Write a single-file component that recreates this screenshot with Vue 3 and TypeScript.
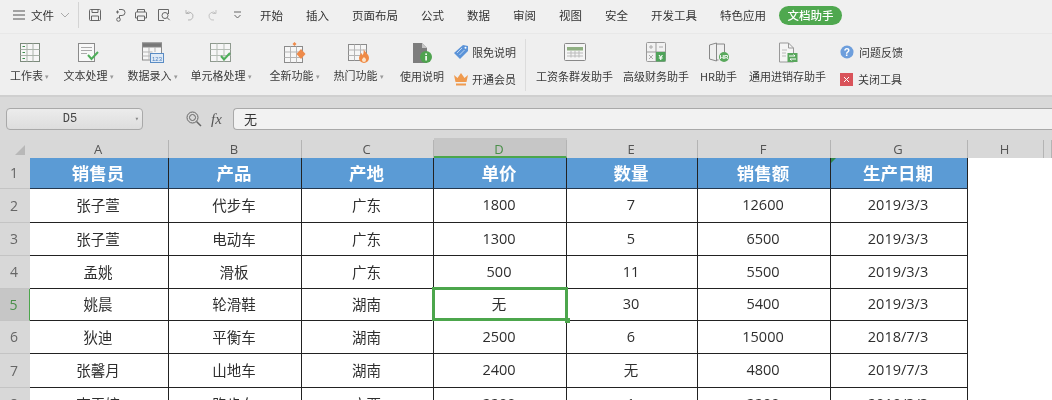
<script setup lang="ts">
const tabs: string[] = ['开始', '插入', '页面布局', '公式', '数据', '审阅', '视图', '安全', '开发工具', '特色应用']
const cols: string[] = ['A', 'B', 'C', 'D', 'E', 'F', 'G', 'H']
const head: string[] = ['销售员', '产品', '产地', '单价', '数量', '销售额', '生产日期']
const rows: string[][] = [
  ['张子萱', '代步车', '广东', '1800', '7', '12600', '2019/3/3'],
  ['张子萱', '电动车', '广东', '1300', '5', '6500', '2019/3/3'],
  ['孟姚', '滑板', '广东', '500', '11', '5500', '2019/3/3'],
  ['姚晨', '轮滑鞋', '湖南', '无', '30', '5400', '2019/3/3'],
  ['狄迪', '平衡车', '湖南', '2500', '6', '15000', '2018/7/3'],
  ['张馨月', '山地车', '湖南', '2400', '无', '4800', '2019/7/3'],
  ['李玉婷', '跑步车', '广西', '2200', '1', '2200', '2019/3/3'],
]
</script>

<template>
  <div class="app">
    <header class="topbar">
      <svg class="menu" width="12" height="10" viewBox="0 0 12 10"><path d="M0 1h12M0 5h12M0 9h12" stroke="#555" fill="none" /></svg>
      <span class="file">文件</span>
      <svg class="chev" width="10" height="6" viewBox="0 0 10 6"><path d="M1 1l4 4 4-4" stroke="#aaa" fill="none" /></svg>
      <i class="vsep"></i>
      <div class="quick">
        <svg width="14" height="14" viewBox="0 0 14 14" fill="none" stroke="#666"><path d="M1.5 2.5a1 1 0 0 1 1-1h9a1 1 0 0 1 1 1v9a1 1 0 0 1-1 1h-9a1 1 0 0 1-1-1zM4 1.5v3h6v-3M3.5 12.5V8h7v4.5" /></svg>
        <svg width="14" height="14" viewBox="0 0 14 14" fill="none" stroke="#666"><path d="M3 4h3M4.5 2.500v3M6 1.500h3a3 3 0 0 1 0 6H6.500v2.500" /><circle cx="5.500" cy="11.500" r="1.800" /></svg>
        <svg width="14" height="14" viewBox="0 0 14 14" fill="none" stroke="#666"><path d="M3.500 4V1.500h7V4M3.500 10H1.500V5a1 1 0 0 1 1-1h9a1 1 0 0 1 1 1v5h-2M3.500 8h7v4.500h-7z" /></svg>
        <svg width="14" height="14" viewBox="0 0 14 14" fill="none" stroke="#666"><path d="M11.500 6V1.500h-10v11H7" /><circle cx="8" cy="7.500" r="3" /><path d="M10.200 9.700l2.500 2.500" /></svg>
        <svg class="dim" width="12" height="12" viewBox="0 0 12 12" fill="none" stroke="#b5b5b5"><path d="M3 1v3.500h3.500M3 4.500A4 4 0 1 1 5 11" /></svg>
        <svg class="dim" width="12" height="12" viewBox="0 0 12 12" fill="none" stroke="#c4c4c4"><path d="M9 1v3.500H5.500M9 4.500A4 4 0 1 0 7 11" /></svg>
        <svg class="drop" width="9" height="8" viewBox="0 0 9 8" fill="none" stroke="#666"><path d="M1 1h7M1.500 4l3 3 3-3" /></svg>
      </div>
      <nav class="tabs">
        <span v-for="t in tabs" :key="t">{{ t }}</span>
        <b class="pill">文档助手</b>
      </nav>
    </header>

    <section class="ribbon">
      <div class="tool w-a">
        <svg width="22" height="21" viewBox="0 0 22 21" fill="none" stroke="#7c8a7c"><rect x="1.500" y="1.500" width="19" height="18" fill="#f6f6f6" /><path d="M8 1.500v18M14 1.500v18M1.500 7.500h19M1.500 13.500h19" stroke="#aab3aa" /><path d="M3.500 4.500h2.500M3.500 10.500h2.500M3.500 16.500h2.500" stroke="#3f8f4f" /></svg>
        <span>工作表<em>▾</em></span>
      </div>
      <div class="tool w-b">
        <svg width="24" height="21" viewBox="0 0 24 21" fill="none" stroke="#8a8a8a"><rect x="1.500" y="1.500" width="16" height="18" fill="#f8f8f8" /><path d="M4 5.500h11M4 8.500h11M4 11.500h6" stroke="#aaa" /><path d="M11 13l3.500 4 6.500-7" stroke="#4fae5a" stroke-width="2" /></svg>
        <span>文本处理<em>▾</em></span>
      </div>
      <div class="tool w-c">
        <svg width="24" height="21" viewBox="0 0 24 21" fill="none" stroke="#8b8b8b"><rect x="1.500" y="1" width="19" height="17" fill="#f6f6f6" /><rect x="1.500" y="1" width="19" height="4" fill="#777" /><path d="M8 5v13M14 5v5M1.500 10h10M1.500 14h10" stroke="#b5b5b5" /><rect x="9.500" y="11.500" width="13" height="9" fill="#dfeaf6" stroke="#5a8cc4" /><text x="16" y="19" text-anchor="middle" class="num" fill="#4a7fbf" stroke="none">123</text></svg>
        <span>数据录入<em>▾</em></span>
      </div>
      <div class="tool w-d">
        <svg width="24" height="21" viewBox="0 0 24 21" fill="none" stroke="#8f9a8f"><rect x="1.500" y="1.500" width="20" height="18" fill="#f6f6f6" /><path d="M8 1.500v18M15 1.500v18M1.500 7.500h20M1.500 13.500h20" stroke="#b5bdb5" /><path d="M12 14l3 3.500 6-6.500" stroke="#4fae5a" stroke-width="2" /></svg>
        <span>单元格处理<em>▾</em></span>
      </div>
      <div class="tool w-e">
        <svg width="24" height="22" viewBox="0 0 24 22" fill="none" stroke="#8b8b8b"><rect x="1.500" y="4.500" width="18" height="16" fill="#f6f6f6" /><path d="M7.500 4.500v16M13.500 4.500v16M1.500 10h18M1.500 15.500h18" stroke="#b5b5b5" /><path d="M18 7l4.500 5-4.500 5-4.500-5z" fill="#ee8a4a" stroke="none" /><path d="M11.500 0l2 2-2 2-2-2z" fill="#ee8a4a" stroke="none" /></svg>
        <span>全新功能<em>▾</em></span>
      </div>
      <div class="tool w-f">
        <svg width="24" height="22" viewBox="0 0 24 22" fill="none" stroke="#8b8b8b"><rect x="1.500" y="2.500" width="18" height="16" fill="#f6f6f6" /><path d="M7.500 2.500v16M13.500 2.500v16M1.500 8h18M1.500 13.500h18" stroke="#b5b5b5" /><path d="M16.500 7c1 3 5.500 5 5.500 9a5 5 0 0 1-10 0c0-2 1.500-3 2-5 1 .5 1.500 1.500 1.500 2.500 1-1.500 1.500-4 1-6.500z" fill="#ef8a45" stroke="none" /><path d="M17 15c.8 1 2 1.600 2 3a2 2 0 0 1-4 0c0-1 .7-1.500 2-3z" fill="#fbe3c8" stroke="none" /></svg>
        <span>热门功能<em>▾</em></span>
      </div>
      <div class="tool w-g">
        <svg width="24" height="22" viewBox="0 0 24 22"><path d="M3 1h9l5 5v15H3z" fill="#7d7d7d" /><path d="M12 1l5 5h-5z" fill="#c5c5c5" /><circle cx="16" cy="15" r="6" fill="#4fa34f" /><rect x="15.300" y="14" width="1.600" height="4.500" fill="#fff" /><rect x="15.300" y="11.400" width="1.600" height="1.600" fill="#fff" /></svg>
        <span>使用说明</span>
      </div>
      <div class="pair first">
        <div class="link">
          <svg width="16" height="16" viewBox="0 0 16 16"><path d="M10 1l5 1 0 5-8 8-6-6z" fill="#5b93d8" /><path d="M4 9l5-5M6.500 11l5-5" stroke="#bcd5f2" /><circle cx="12.500" cy="3.700" r="1" fill="#fff" /></svg>
          <span>限免说明</span>
        </div>
        <div class="link">
          <svg width="16" height="14" viewBox="0 0 16 14"><path d="M1 3l3.500 3L8 1l3.500 5L15 3l-1.500 7h-11z" fill="#ef9a4e" /><rect x="3" y="11.500" width="10" height="2" fill="#ef9a4e" /></svg>
          <span>开通会员</span>
        </div>
      </div>
      <i class="rsep"></i>
      <div class="tool w-h">
        <svg width="24" height="20" viewBox="0 0 24 20" fill="none" stroke="#888"><rect x="1.500" y="1.500" width="21" height="17" rx="1" fill="#f5f5f5" /><rect x="4" y="5" width="16" height="3.500" fill="#8faf82" stroke="none" /><path d="M4 11h16M4 14h16M8 8.500v7M12 8.500v7M16 8.500v7" stroke="#bbb" /></svg>
        <span>工资条群发助手</span>
      </div>
      <div class="tool w-i">
        <svg width="20" height="20" viewBox="0 0 20 20" fill="none" stroke="#999"><rect x=".5" y=".5" width="19" height="19" rx="1" fill="#f2f2f2" /><path d="M10 .5v19M.5 10h19" /><path d="M3 5h4M5 3v4M13 5h4M3 13l4 4M7 13l-4 4" stroke="#aaa" /><rect x="10" y="10" width="9.500" height="9.500" fill="#4fa35a" stroke="none" /><text x="14.800" y="18" text-anchor="middle" class="yen" fill="#fff" stroke="none">¥</text></svg>
        <span>高级财务助手</span>
      </div>
      <div class="tool w-j">
        <svg width="22" height="21" viewBox="0 0 22 21" fill="none" stroke="#888"><path d="M1.500 3l7-2v18l-7-2zM8.500 2h8v8" /><path d="M8.500 18h2" /><circle cx="16" cy="15" r="5" fill="#59a85c" stroke="none" /><text x="16" y="17" text-anchor="middle" class="hr" fill="#fff" stroke="none">HR</text></svg>
        <span>HR助手</span>
      </div>
      <div class="tool w-k">
        <svg width="20" height="21" viewBox="0 0 20 21" fill="none" stroke="#999"><path d="M1.500 1h9l5 5v14h-14z" fill="#f5f5f5" /><path d="M10.500 1v5h5" /><path d="M4 8h5M4 11h4M4 14h4" stroke="#bbb" /><rect x="9.500" y="11" width="10" height="9" fill="#58a65c" stroke="none" /><path d="M11 14h6l-1.500-1.500M18 17h-6l1.500 1.500" stroke="#fff" /></svg>
        <span>通用进销存助手</span>
      </div>
      <div class="pair last">
        <div class="link">
          <svg width="14" height="14" viewBox="0 0 15 15"><circle cx="7.500" cy="7.500" r="7" fill="#6d9edc" /><text x="7.500" y="11.500" text-anchor="middle" class="q" fill="#fff">?</text></svg>
          <span>问题反馈</span>
        </div>
        <div class="link">
          <svg width="13" height="13" viewBox="0 0 13 13"><rect width="13" height="13" fill="#d9535a" /><path d="M4 4l5 5M9 4l-5 5" stroke="#fff" /></svg>
          <span>关闭工具</span>
        </div>
      </div>
    </section>

    <section class="formula">
      <div class="namebox"><span>D5</span><em>▾</em></div>
      <svg class="zoomico" width="16" height="16" viewBox="0 0 16 16" fill="none" stroke="#666"><circle cx="6.500" cy="6.500" r="5.500" /><circle cx="6.500" cy="6.500" r="3" /><path d="M10.500 10.500l4.500 4.500" stroke-width="1.500" /></svg>
      <span class="fx">fx</span>
      <div class="input">无</div>
    </section>

    <section class="sheet">
      <div class="corner"><i></i></div>
      <div v-for="c in cols" :key="c" class="colhead" :class="{ active: c === 'D' }">{{ c }}</div>
      <div class="colhead"></div>

      <div class="rowhead">1</div>
      <div v-for="(h, i) in head" :key="h" class="cell hd" :class="{ flag: i === 6 }">{{ h }}</div>
      <div></div><div></div>

      <template v-for="(r, ri) in rows" :key="ri">
        <div class="rowhead" :class="{ active: ri === 3 }">{{ ri + 2 }}</div>
        <div v-for="(v, ci) in r" :key="ci" class="cell" :class="{ sel: ri === 3 && ci === 3 }">{{ v }}</div>
        <div></div><div></div>
      </template>
    </section>
  </div>
</template>

<style>
html, body { margin: 0; background: #fff; }
</style>

<style scoped>
.app {
  width: 1052px;
  height: 400px;
  overflow: hidden;
  display: flex;
  flex-direction: column;
  font-family: "Noto Sans CJK SC", "Noto Sans", sans-serif;
  color: #333;
  filter: blur(0.35px);
}
.topbar {
  height: 33px;
  flex: none;
  background: #f0f0f0;
  display: flex;
  align-items: center;
  padding: 0 0 3px 13px;
  box-sizing: border-box;
  font-size: 11.5px;
  line-height: 16px;
}
.file { margin-left: 6px; width: 23px; white-space: nowrap; }
.chev { margin-left: 6px; }
.vsep { width: 1px; height: 26px; background: #d4d4d4; margin-left: 8px; }
.quick { display: flex; align-items: center; margin-left: 9px; width: 159px; flex: none; }
.quick svg:nth-child(2) { margin-left: 11px; }
.quick svg:nth-child(3) { margin-left: 7px; }
.quick svg:nth-child(4) { margin-left: 9px; }
.quick svg:nth-child(5) { margin-left: 12px; }
.quick svg:nth-child(6) { margin-left: 12px; }
.quick svg:nth-child(7) { margin-left: 14px; }
.tabs { display: flex; align-items: center; gap: 23px; white-space: nowrap; margin-left: 13px; }
.tabs span { display: block; }
.pill {
  margin-left: -10px;
  background: #4fa84f;
  color: #fff;
  font-weight: 500;
  height: 19px;
  line-height: 19px;
  width: 63px;
  text-align: center;
  border-radius: 10px;
}
.ribbon {
  height: 64px;
  flex: none;
  background: #efefef;
  border-top: 1px solid #e8e8e8;
  border-bottom: 2px solid #cfcfcf;
  box-sizing: border-box;
  display: flex;
  align-items: flex-start;
  font-size: 11px;
  line-height: 14px;
  color: #3a3a3a;
}
.tool {
  flex: none;
  display: flex;
  flex-direction: column;
  align-items: center;
  height: 41px;
  padding-top: 8px;
  justify-content: space-between;
  white-space: nowrap;
}
.tool em {
  font-style: normal;
  font-size: 7px;
  color: #999;
  margin-left: 2px;
  vertical-align: 1px;
}
.w-a { width: 39px; margin-left: 10px; }
.w-b { width: 51px; margin-left: 14px; }
.w-c { width: 51px; margin-left: 13px; }
.w-d { width: 62px; margin-left: 12px; }
.w-e { width: 51px; margin-left: 17px; }
.w-f { width: 51px; margin-left: 13px; }
.w-g { width: 44px; margin-left: 16px; }
.w-h { width: 77px; margin-left: 10px; }
.w-i { width: 66px; margin-left: 10px; }
.w-j { width: 37px; margin-left: 11px; }
.w-k { width: 77px; margin-left: 12px; }
.pair {
  flex: none;
  display: flex;
  flex-direction: column;
  gap: 11px;
  padding-top: 10px;
}
.pair.first { margin-left: 9px; width: 72px; }
.pair.last { margin-left: 14px; }
.link { display: flex; align-items: center; gap: 3px; height: 16px; white-space: nowrap; }
.pair.last .link { gap: 5px; }
.rsep { flex: none; width: 1px; height: 52px; margin-top: 5px; background: #dcdcdc; }
.num { font: 6px "Liberation Sans", sans-serif; }
.yen { font: bold 8px "Liberation Sans", sans-serif; }
.hr { font: bold 6px "Liberation Sans", sans-serif; }
.q { font: bold 11px "Liberation Sans", sans-serif; }
.formula {
  height: 43px;
  flex: none;
  box-sizing: border-box;
  background: #d9d9d9;
  display: flex;
  align-items: flex-start;
  padding: 11px 0 0 6px;
}
.namebox {
  width: 137px;
  height: 22px;
  box-sizing: border-box;
  border: 1px solid #a9a9a9;
  border-radius: 4px;
  background: linear-gradient(#ececec, #dddddd);
  padding-right: 9px;
  position: relative;
  display: flex;
  align-items: center;
  justify-content: center;
  font: 12px/20px "Liberation Mono", monospace;
  color: #444;
}
.namebox em {
  position: absolute;
  right: 3px;
  top: 0;
  font-style: normal;
  font-size: 7px;
  color: #888;
}
.zoomico { margin: 3px 0 0 43px; }
.fx {
  width: 16px;
  margin: 1px 0 0 9px;
  font: italic 15px/20px "Liberation Serif", serif;
  color: #555;
}
.input {
  margin-left: 6px;
  flex: 1;
  height: 22px;
  box-sizing: border-box;
  border: 1px solid #a9a9a9;
  border-right: 0;
  border-radius: 4px 0 0 4px;
  background: #f2f2f2;
  padding-left: 10px;
  font-size: 13px;
  line-height: 20px;
  color: #333;
}
.sheet {
  flex: none;
  height: 260px;
  background: #fff;
  display: grid;
  grid-template-columns: 30px 139px 133px 132px 133px 131px 133px 137px 76px 8px;
  grid-template-rows: 18px 31px 34px 33px 33px 32px 33px 34px 33px;
}
.corner { background: #d8d8d8; position: relative; box-sizing: border-box; }
.corner i {
  position: absolute;
  right: 5px;
  bottom: 3px;
  width: 0;
  height: 0;
  border-left: 10px solid transparent;
  border-bottom: 10px solid #b8b8b8;
}
.colhead {
  background: #d8d8d8;
  border-right: 1px solid #b4b4b4;
  box-sizing: border-box;
  padding-right: 2px;
  text-align: center;
  font: 13px/18px "Open Sans", sans-serif;
  color: #555;
}
.colhead.active {
  background: #c6c6c6;
  color: #4a8f4a;
  border-bottom: 2px solid #4ca64c;
  box-shadow: 0 -2px 0 #c6c6c6;
}
.rowhead {
  background: #d8d8d8;
  border-bottom: 1px solid #c4c4c4;
  box-sizing: border-box;
  display: flex;
  align-items: center;
  justify-content: center;
  padding: 0 2px 1px 0;
  font: 14px "Open Sans", sans-serif;
  color: #666;
}
.rowhead.active { background: #c6c6c6; color: #4a8f4a; border-right: 1px solid #4ca64c; }
.cell {
  border-right: 1px solid #222;
  border-bottom: 1px solid #222;
  box-sizing: border-box;
  display: flex;
  align-items: center;
  justify-content: center;
  padding: 0 2px 2px 0;
  font: 14.5px "Open Sans", "Noto Sans CJK SC", sans-serif;
  color: #2e2e2e;
  white-space: nowrap;
  background: #fff;
}
.cell.hd {
  background: #5b9bd5;
  color: #fff;
  font: 700 17.5px "Noto Sans CJK SC", sans-serif;
  border-bottom: 1px solid #24384f;
}
.cell.flag { position: relative; }
.cell.flag::before {
  content: "";
  position: absolute;
  left: 0;
  top: 0;
  width: 0;
  height: 0;
  border-top: 5px solid #2f8a4a;
  border-right: 5px solid transparent;
}
.cell.sel { position: relative; }
.cell.sel::before {
  content: "";
  position: absolute;
  left: -2px;
  right: -2px;
  top: -2px;
  bottom: -1px;
  border: 3px solid #4ca64c;
}
.cell.sel::after {
  content: "";
  position: absolute;
  right: -4px;
  bottom: -3px;
  width: 5px;
  height: 5px;
  background: #4ca64c;
}
</style>
